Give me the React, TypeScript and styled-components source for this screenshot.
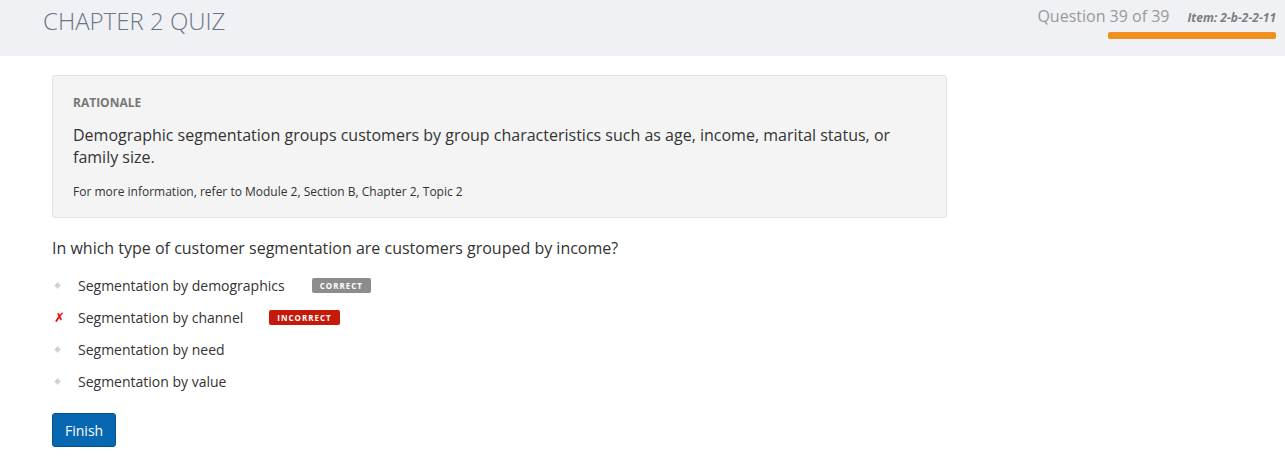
import React from "react";
import styled, { createGlobalStyle } from "styled-components";

const Global = createGlobalStyle`
  html, body { margin: 0; padding: 0; background: #fff; }
  body { font-family: "Open Sans", "Liberation Sans", sans-serif; color: #333; }
`;

const Header = styled.header`
  height: 56px;
  background: #f0f1f5;
  display: flex;
  justify-content: space-between;
  align-items: flex-start;
  padding: 0 9px 0 43px;
`;

const Title = styled.h1`
  margin: 5px 0 0;
  font-weight: 300;
  font-size: 24px;
  line-height: 32px;
  color: #6b7685;
`;

const Progress = styled.div`
  display: flex;
  flex-direction: column;
  align-items: flex-end;
  padding-top: 5px;
`;

const ProgressText = styled.div`
  display: flex;
  align-items: baseline;
  gap: 18px;
`;

const Counter = styled.span`
  font-size: 16px;
  color: #999;
  line-height: 22px;
`;

const ItemId = styled.span`
  font-size: 12px;
  font-weight: 700;
  font-style: italic;
  color: #7e7e7e;
`;

const Bar = styled.div`
  margin-top: 5px;
  width: 168px;
  height: 7px;
  border-radius: 2px;
  background: #f0901e;
`;

const Main = styled.main`
  padding: 19px 0 0 52px;
  width: 895px;
`;

const Rationale = styled.section`
  background: #f4f4f4;
  border: 1px solid #e2e2e2;
  border-radius: 3px;
  padding: 18px 20px 16px;
`;

const Label = styled.div`
  font-size: 12px;
  font-weight: 700;
  color: #777;
  line-height: 18px;
`;

const Explanation = styled.p`
  margin: 12px 0 0;
  font-size: 16px;
  line-height: 22px;
  color: #333;
`;

const Note = styled.p`
  margin: 15px 0 0;
  font-size: 12px;
  line-height: 18px;
  color: #333;
`;

const Question = styled.p`
  margin: 18px 0 0;
  font-size: 16px;
  line-height: 24px;
  color: #333;
`;

const Options = styled.ul`
  list-style: none;
  margin: 9px 0 0;
  padding: 0;
`;

const Option = styled.li`
  display: flex;
  align-items: center;
  height: 32px;
  font-size: 14px;
  color: #333;
`;

const Marker = styled.span`
  width: 26px;
  display: flex;
  justify-content: flex-start;
  padding-left: 2px;
  box-sizing: border-box;
`;

const Cross = styled.span`
  color: #e00;
  font-size: 13px;
  font-weight: 700;
  font-family: "DejaVu Sans", sans-serif;
  line-height: 1;
`;

const Badge = styled.span<{ $tone: "correct" | "incorrect" }>`
  margin-left: ${(p) => (p.$tone === "correct" ? 27 : 26)}px;
  display: inline-block;
  height: 15px;
  line-height: 15px;
  padding: 0 8px;
  font-size: 8px;
  font-weight: 700;
  letter-spacing: 1px;
  color: #fff;
  border-radius: 2px;
  background: ${(p) => (p.$tone === "correct" ? "#8c8c8c" : "#c41a0a")};
`;

const FinishButton = styled.button`
  margin-top: 16px;
  height: 34px;
  padding: 0 12px;
  background: #0767b1;
  border: 1px solid #04538f;
  border-radius: 3px;
  color: #fff;
  font-family: "Open Sans", "Liberation Sans", sans-serif;
  font-size: 14px;
  cursor: pointer;
`;

const Diamond = () => (
  <svg width="7" height="7" viewBox="0 0 7 7">
    <path d="M3.5 0L5 2 7 3.5 5 5 3.5 7 2 5 0 3.5 2 2z" fill="#cfcfcf" />
  </svg>
);

type Opt = { text: string; cross?: boolean; badge?: "correct" | "incorrect" };

const options: Opt[] = [
  { text: "Segmentation by demographics", badge: "correct" },
  { text: "Segmentation by channel", cross: true, badge: "incorrect" },
  { text: "Segmentation by need" },
  { text: "Segmentation by value" },
];

export default function App() {
  return (
    <>
      <Global />
      <Header>
        <Title>CHAPTER 2 QUIZ</Title>
        <Progress>
          <ProgressText>
            <Counter>Question 39 of 39</Counter>
            <ItemId>Item: 2-b-2-2-11</ItemId>
          </ProgressText>
          <Bar />
        </Progress>
      </Header>
      <Main>
        <Rationale>
          <Label>RATIONALE</Label>
          <Explanation>
            Demographic segmentation groups customers by group characteristics such as age, income, marital status, or
            family size.
          </Explanation>
          <Note>For more information, refer to Module 2, Section B, Chapter 2, Topic 2</Note>
        </Rationale>
        <Question>In which type of customer segmentation are customers grouped by income?</Question>
        <Options>
          {options.map((o) => (
            <Option key={o.text}>
              <Marker>{o.cross ? <Cross>✗</Cross> : <Diamond />}</Marker>
              {o.text}
              {o.badge && (
                <Badge $tone={o.badge}>{o.badge === "correct" ? "CORRECT" : "INCORRECT"}</Badge>
              )}
            </Option>
          ))}
        </Options>
        <FinishButton>Finish</FinishButton>
      </Main>
    </>
  );
}
